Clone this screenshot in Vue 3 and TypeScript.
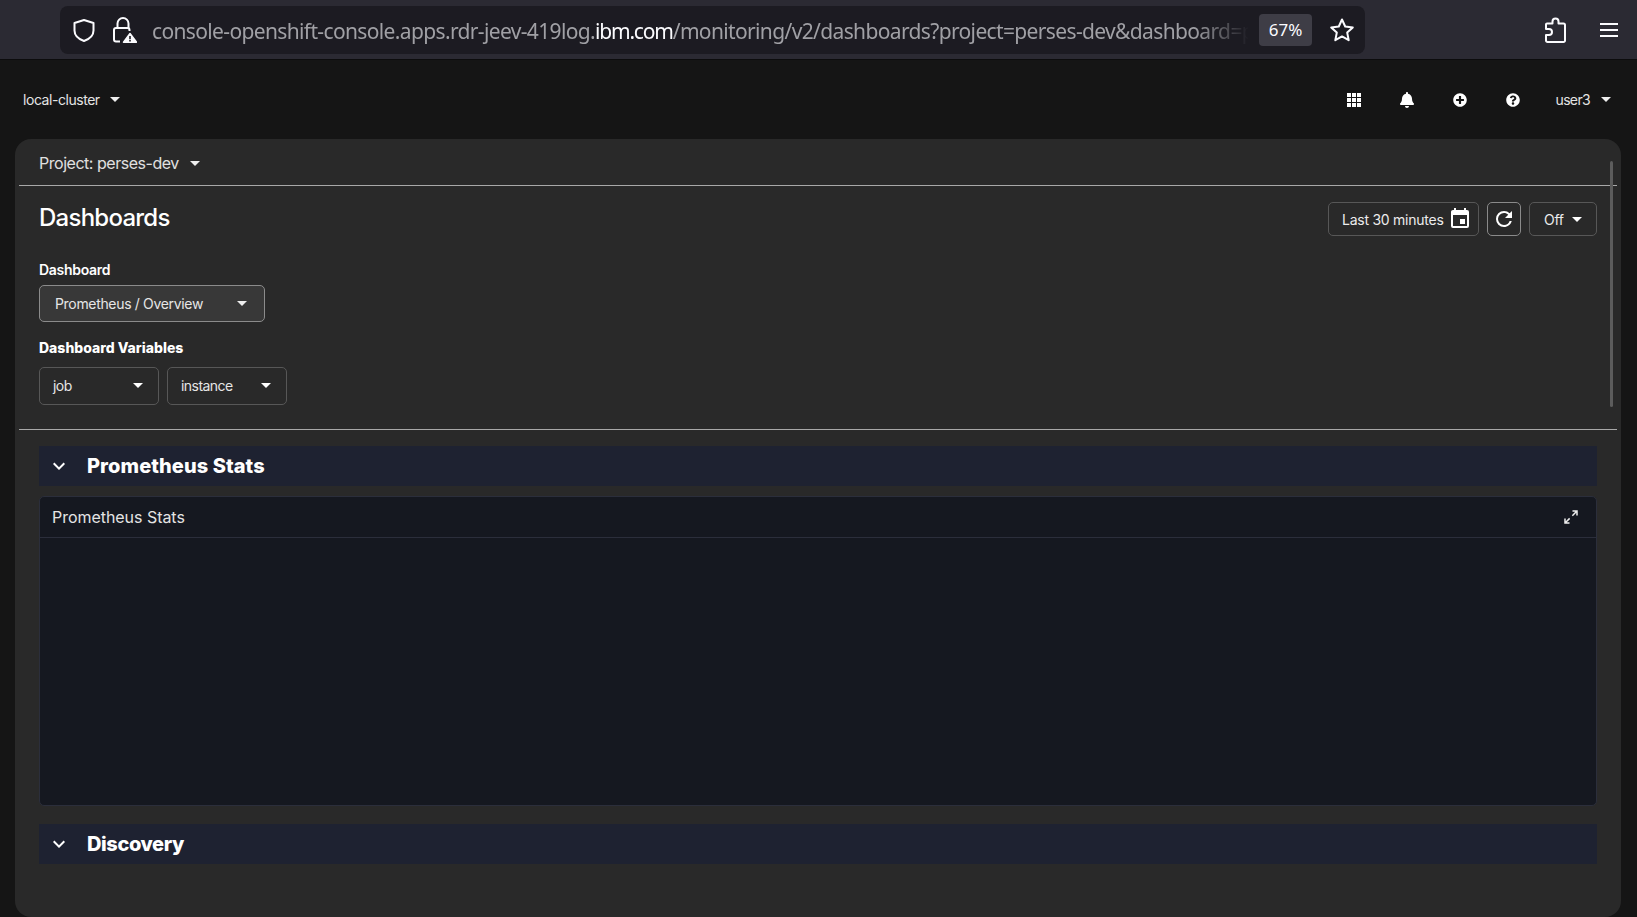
<script setup lang="ts">
const urlHead = 'console-openshift-console.apps.rdr-jeev-419log.'
const urlHost = 'ibm.com'
const urlTail = '/monitoring/v2/dashboards?project=perses-dev&dashboard=p'
const caret = 'M0 0h10L5 5z'
</script>

<template>
  <div class="page">
    <header class="browser">
      <div class="urlbar">
        <svg class="shield" viewBox="0 0 24 26" width="24" height="26" fill="none" stroke="#fbfbfe" stroke-width="2" stroke-linejoin="round">
          <path d="M12 3 2.500 6v7.500c0 5 3.600 8.400 9.500 10.500 5.900-2.100 9.500-5.500 9.500-10.500V6z" />
        </svg>
        <svg class="lock" viewBox="0 0 26 28" width="26" height="28">
          <path d="M6.500 12V7.500a5.500 5.500 0 0 1 11 0V12" fill="none" stroke="#fbfbfe" stroke-width="2" />
          <path d="M9 25.500H5A2 2 0 0 1 3 23.500V14a2 2 0 0 1 2-2h11.500a2 2 0 0 1 2 2v1" fill="none" stroke="#fbfbfe" stroke-width="2" />
          <path d="M19 17.500 25.500 26.200h-13z" fill="#fbfbfe" stroke="#fbfbfe" stroke-width="1.500" stroke-linejoin="round" />
          <path d="M18.200 20h1.600v3.300h-1.600zM18.200 24h1.600v1.400h-1.600z" fill="#1c1b22" />
        </svg>
        <div class="url">
          <span class="url-dim">{{ urlHead }}</span><span class="url-host">{{ urlHost }}</span><span class="url-dim">{{ urlTail }}</span>
        </div>
        <div class="zoom-pill">67%</div>
        <svg class="star" viewBox="0 0 26 26" width="26" height="26" fill="none" stroke="#fbfbfe" stroke-width="2" stroke-linejoin="round">
          <path d="M13 2.500 16.200 9.500 23.800 10.400 18.200 15.600 19.700 23.200 13 19.400 6.300 23.200 7.800 15.600 2.200 10.400 9.800 9.500z" />
        </svg>
      </div>
      <div class="browser-actions">
        <svg viewBox="0 0 22 26" width="22" height="26" fill="none" stroke="#fbfbfe" stroke-width="2" stroke-linejoin="round">
          <path d="M3 6.500h5.500V4.500a3 3 0 0 1 6 0v2h5a1.500 1.500 0 0 1 1.500 1.500v15.500a1.500 1.500 0 0 1-1.500 1.500h-16A1.500 1.500 0 0 1 2 23.500V18h3a3 3 0 0 0 0-6H2V7.500a1 1 0 0 1 1-1z" />
        </svg>
        <svg viewBox="0 0 20 14" width="20" height="14" fill="none" stroke="#fbfbfe" stroke-width="1.800">
          <path d="M1 1h18M1 7h18M1 13h18" />
        </svg>
      </div>
    </header>

    <nav class="masthead">
      <button class="mast-btn cluster">
        local-cluster
        <svg class="caret" viewBox="0 0 10 5" width="10" height="5" fill="#eee"><path :d="caret" /></svg>
      </button>
      <div class="mast-tools">
        <svg viewBox="0 0 14 14" width="14" height="14" fill="#fff">
          <path d="M0 0h4v4H0zM5 0h4v4H5zM10 0h4v4h-4zM0 5h4v4H0zM5 5h4v4H5zM10 5h4v4h-4zM0 10h4v4H0zM5 10h4v4H5zM10 10h4v4h-4z" />
        </svg>
        <svg viewBox="0 0 448 512" width="14" height="16" fill="#fff">
          <path d="M224 512c35.320 0 63.970-28.650 63.970-64H160.030c0 35.350 28.650 64 63.970 64zm215.390-149.710c-19.320-20.760-55.470-51.990-55.470-154.290 0-77.700-54.480-139.900-127.940-155.160V32c0-17.670-14.320-32-31.980-32s-31.980 14.330-31.980 32v20.840C118.560 68.100 64.080 130.300 64.080 208c0 102.300-36.150 133.530-55.470 154.290-6 6.450-8.660 14.160-8.610 21.710.11 16.400 12.980 32 32.100 32h383.800c19.120 0 32-15.600 32.100-32 .05-7.550-2.610-15.270-8.610-21.710z" />
        </svg>
        <svg viewBox="0 0 512 512" width="14" height="14" fill="#fff">
          <path d="M256 8C119 8 8 119 8 256s111 248 248 248 248-111 248-248S393 8 256 8zm144 276c0 6.600-5.400 12-12 12h-92v92c0 6.600-5.400 12-12 12h-56c-6.600 0-12-5.400-12-12v-92h-92c-6.600 0-12-5.400-12-12v-56c0-6.600 5.400-12 12-12h92v-92c0-6.600 5.400-12 12-12h56c6.600 0 12 5.400 12 12v92h92c6.600 0 12 5.400 12 12v56z" />
        </svg>
        <svg viewBox="0 0 512 512" width="14" height="14" fill="#fff">
          <path d="M504 256c0 136.997-111.043 248-248 248S8 392.997 8 256C8 119.083 119.043 8 256 8s248 111.083 248 248zM262.655 90c-54.497 0-89.255 22.957-116.549 63.758-3.536 5.286-2.353 12.415 2.715 16.258l34.699 26.310c5.205 3.947 12.621 3.008 16.665-2.122 17.864-22.658 30.113-35.797 57.303-35.797 20.429 0 45.698 13.148 45.698 32.958 0 14.976-12.363 22.667-32.534 33.976C247.128 238.528 216 254.941 216 296v4c0 6.627 5.373 12 12 12h56c6.627 0 12-5.373 12-12v-1.333c0-28.462 83.186-29.647 83.186-106.667 0-58.002-60.165-102-116.531-102zM256 338c-25.365 0-46 20.635-46 46 0 25.364 20.635 46 46 46s46-20.636 46-46c0-25.365-20.635-46-46-46z" />
        </svg>
        <button class="mast-btn user">
          user3
          <svg class="caret" viewBox="0 0 10 5" width="10" height="5" fill="#eee"><path :d="caret" /></svg>
        </button>
      </div>
    </nav>

    <main class="panel">
      <div class="scrollbar"></div>
      <div class="project-bar">
        <span>Project: perses-dev</span>
        <svg viewBox="0 0 10 5" width="10" height="5" fill="#eee"><path :d="caret" /></svg>
      </div>

      <section class="controls">
        <div class="title-row">
          <h1>Dashboards</h1>
          <div class="time-tools">
            <button class="tool time">
              Last 30 minutes
              <svg viewBox="0 0 24 24" width="24" height="24" fill="#fff">
                <path d="M19 19H5V8h14m-3-7v2H8V1H6v2H5c-1.110 0-2 .89-2 2v14a2 2 0 0 0 2 2h14a2 2 0 0 0 2-2V5a2 2 0 0 0-2-2h-1V1m-1 11h-5v5h5v-5z" />
              </svg>
            </button>
            <button class="tool refresh">
              <svg viewBox="0 0 24 24" width="24" height="24" fill="#fff">
                <path d="M17.650 6.350A7.958 7.958 0 0 0 12 4a8 8 0 0 0-8 8 8 8 0 0 0 8 8c3.730 0 6.840-2.550 7.730-6h-2.080A5.990 5.990 0 0 1 12 18a6 6 0 0 1-6-6 6 6 0 0 1 6-6c1.660 0 3.140.69 4.220 1.780L13 11h7V4l-2.350 2.350z" />
              </svg>
            </button>
            <button class="tool off">
              Off
              <svg viewBox="0 0 10 5" width="10" height="5" fill="#fff"><path :d="caret" /></svg>
            </button>
          </div>
        </div>

        <label class="field-label">Dashboard</label>
        <button class="dash-select">
          Prometheus / Overview
          <svg viewBox="0 0 10 5" width="10" height="5" fill="#eee"><path :d="caret" /></svg>
        </button>

        <label class="field-label vars-label">Dashboard Variables</label>
        <div class="vars">
          <button class="var-select">
            job
            <svg viewBox="0 0 10 5" width="10" height="5" fill="#fff"><path :d="caret" /></svg>
          </button>
          <button class="var-select">
            instance
            <svg viewBox="0 0 10 5" width="10" height="5" fill="#fff"><path :d="caret" /></svg>
          </button>
        </div>
      </section>

      <section class="rows">
        <div class="row-head">
          <svg viewBox="0 0 24 24" width="24" height="24" fill="#fff">
            <path d="M7.410 8.580 12 13.170l4.590-4.590L18 10l-6 6-6-6z" />
          </svg>
          <h2>Prometheus Stats</h2>
        </div>
        <article class="card">
          <div class="card-head">
            <span>Prometheus Stats</span>
            <svg viewBox="0 0 24 24" width="18" height="18" fill="#eee">
              <path d="M10 21v-2H6.410l4.500-4.500-1.410-1.410-4.500 4.500V14H3v7zM14.500 10.910l4.500-4.500V10h2V3h-7v2h3.590l-4.500 4.500z" />
            </svg>
          </div>
        </article>
        <div class="row-head second">
          <svg viewBox="0 0 24 24" width="24" height="24" fill="#fff">
            <path d="M7.410 8.580 12 13.170l4.590-4.590L18 10l-6 6-6-6z" />
          </svg>
          <h2>Discovery</h2>
        </div>
      </section>
    </main>
  </div>
</template>

<style scoped>
.page {
  width: 1637px;
  height: 917px;
  display: flex;
  flex-direction: column;
  background: #151515;
  color: #e8e8e8;
  font-family: Inter, "Noto Sans", sans-serif;
  overflow: hidden;
}
button {
  font: inherit;
  color: inherit;
  background: none;
  border: 0;
  padding: 0;
}
.browser {
  height: 60px;
  flex: none;
  display: flex;
  align-items: center;
  background: #2b2a33;
  border-bottom: 1px solid #0c0c0d;
  box-sizing: border-box;
  padding-left: 60px;
  padding-right: 18px;
}
.urlbar {
  width: 1305px;
  height: 48px;
  background: #1c1b22;
  border-radius: 8px;
  display: flex;
  align-items: center;
  padding: 0 10px 0 12px;
  box-sizing: border-box;
}
.lock {
  margin-left: 15px;
}
.url {
  width: 1097px;
  margin-left: 15px;
  padding-top: 3px;
  overflow: hidden;
  white-space: nowrap;
  font-family: "Noto Sans", sans-serif;
  font-size: 21px;
  letter-spacing: -0.64px;
  -webkit-mask-image: linear-gradient(to right, #000 95%, transparent 100%);
  mask-image: linear-gradient(to right, #000 95%, transparent 100%);
}
.url-dim {
  color: #a0a0a5;
}
.url-host {
  color: #fbfbfe;
  letter-spacing: -1.2px;
}
.zoom-pill {
  width: 53px;
  height: 32px;
  margin-left: 10px;
  border-radius: 4px;
  background: #3e3d46;
  color: #fbfbfe;
  font-family: "Noto Sans", sans-serif;
  font-size: 17px;
  display: flex;
  align-items: center;
  justify-content: center;
}
.star {
  margin-left: 17px;
}
.browser-actions {
  margin-left: auto;
  display: flex;
  align-items: center;
  gap: 33px;
}
.masthead {
  height: 79px;
  flex: none;
  display: flex;
  align-items: center;
  justify-content: space-between;
  padding: 0 26px 0 23px;
  box-sizing: border-box;
}
.mast-btn {
  display: flex;
  align-items: center;
  gap: 10px;
  font-size: 14px;
  letter-spacing: -0.45px;
  color: #e4e4e4;
}
.mast-tools {
  display: flex;
  align-items: center;
  gap: 39px;
}
.user {
  margin-left: -3px;
  letter-spacing: -0.65px;
  gap: 11px;
}
.panel {
  position: relative;
  flex: 1;
  min-height: 0;
  margin: 0 16px 0 15px;
  padding: 0 4px;
  background: #292929;
  border-radius: 16px;
}
.scrollbar {
  position: absolute;
  right: 8px;
  top: 22px;
  width: 3px;
  height: 246px;
  border-radius: 2px;
  background: #5c5c5c;
}
.project-bar {
  height: 47px;
  box-sizing: border-box;
  padding: 2px 20px 0;
  display: flex;
  align-items: center;
  gap: 11px;
  border-bottom: 1px solid #a8a8a8;
  font-size: 16px;
  letter-spacing: -0.47px;
  color: #e0e0e0;
}
.controls {
  height: 244px;
  box-sizing: border-box;
  padding: 16px 20px 0;
  border-bottom: 1px solid #a8a8a8;
  display: flex;
  flex-direction: column;
  align-items: flex-start;
}
.title-row {
  width: 100%;
  height: 34px;
  display: flex;
  align-items: center;
  justify-content: space-between;
}
h1 {
  margin: -3px 0 0;
  font-size: 24px;
  font-weight: 500;
  letter-spacing: -0.75px;
  color: #fff;
}
.time-tools {
  display: flex;
  gap: 8px;
}
.tool {
  height: 34px;
  box-sizing: border-box;
  border: 1px solid #575757;
  border-radius: 5px;
  display: flex;
  align-items: center;
  font-size: 14px;
  letter-spacing: -0.25px;
  color: #ececec;
}
.time {
  width: 151px;
  padding-left: 13px;
  gap: 4px;
}
.refresh {
  width: 34px;
  justify-content: center;
  border-color: #8a8a8a;
}
.off {
  width: 68px;
  padding-left: 14px;
  gap: 8px;
}
.field-label {
  margin-top: 23px;
  height: 21px;
  line-height: 21px;
  font-size: 14px;
  font-weight: 600;
  letter-spacing: -0.3px;
  color: #fff;
}
.dash-select {
  margin-top: 5px;
  width: 226px;
  height: 37px;
  box-sizing: border-box;
  border: 1px solid #8b8b8b;
  border-radius: 5px;
  background: #383838;
  padding: 0 17px 0 15px;
  display: flex;
  align-items: center;
  justify-content: space-between;
  font-size: 14px;
  letter-spacing: -0.33px;
  color: #e6e6e6;
}
.vars-label {
  margin-top: 15px;
  font-weight: 800;
  letter-spacing: 0;
}
.vars {
  margin-top: 9px;
  display: flex;
  gap: 8px;
}
.var-select {
  width: 120px;
  height: 38px;
  box-sizing: border-box;
  border: 1px solid #575757;
  border-radius: 5px;
  padding: 0 15px 1px 13px;
  display: flex;
  align-items: center;
  justify-content: space-between;
  font-size: 14px;
  letter-spacing: -0.55px;
  color: #e6e6e6;
}
.rows {
  padding: 16px 20px 0;
}
.row-head {
  height: 40px;
  display: flex;
  align-items: center;
  background: #1e2231;
  padding-left: 8px;
}
.second {
  margin-top: 18px;
}
h2 {
  margin: 0 0 0 16px;
  font-size: 20px;
  font-weight: 800;
  letter-spacing: 0.08px;
  color: #fff;
}
.second h2 {
  letter-spacing: -0.4px;
}
.card {
  margin-top: 10px;
  height: 310px;
  box-sizing: border-box;
  background: #151820;
  border: 1px solid #2b2e3b;
  border-radius: 5px;
}
.card-head {
  height: 41px;
  box-sizing: border-box;
  padding: 0 16px 0 12px;
  display: flex;
  align-items: center;
  justify-content: space-between;
  border-bottom: 1px solid #2b2e3b;
  font-size: 16px;
  letter-spacing: -0.04px;
  color: #e4e4e4;
}
</style>

<style>
html,
body {
  margin: 0;
  overflow: hidden;
  background: #151515;
}
</style>
